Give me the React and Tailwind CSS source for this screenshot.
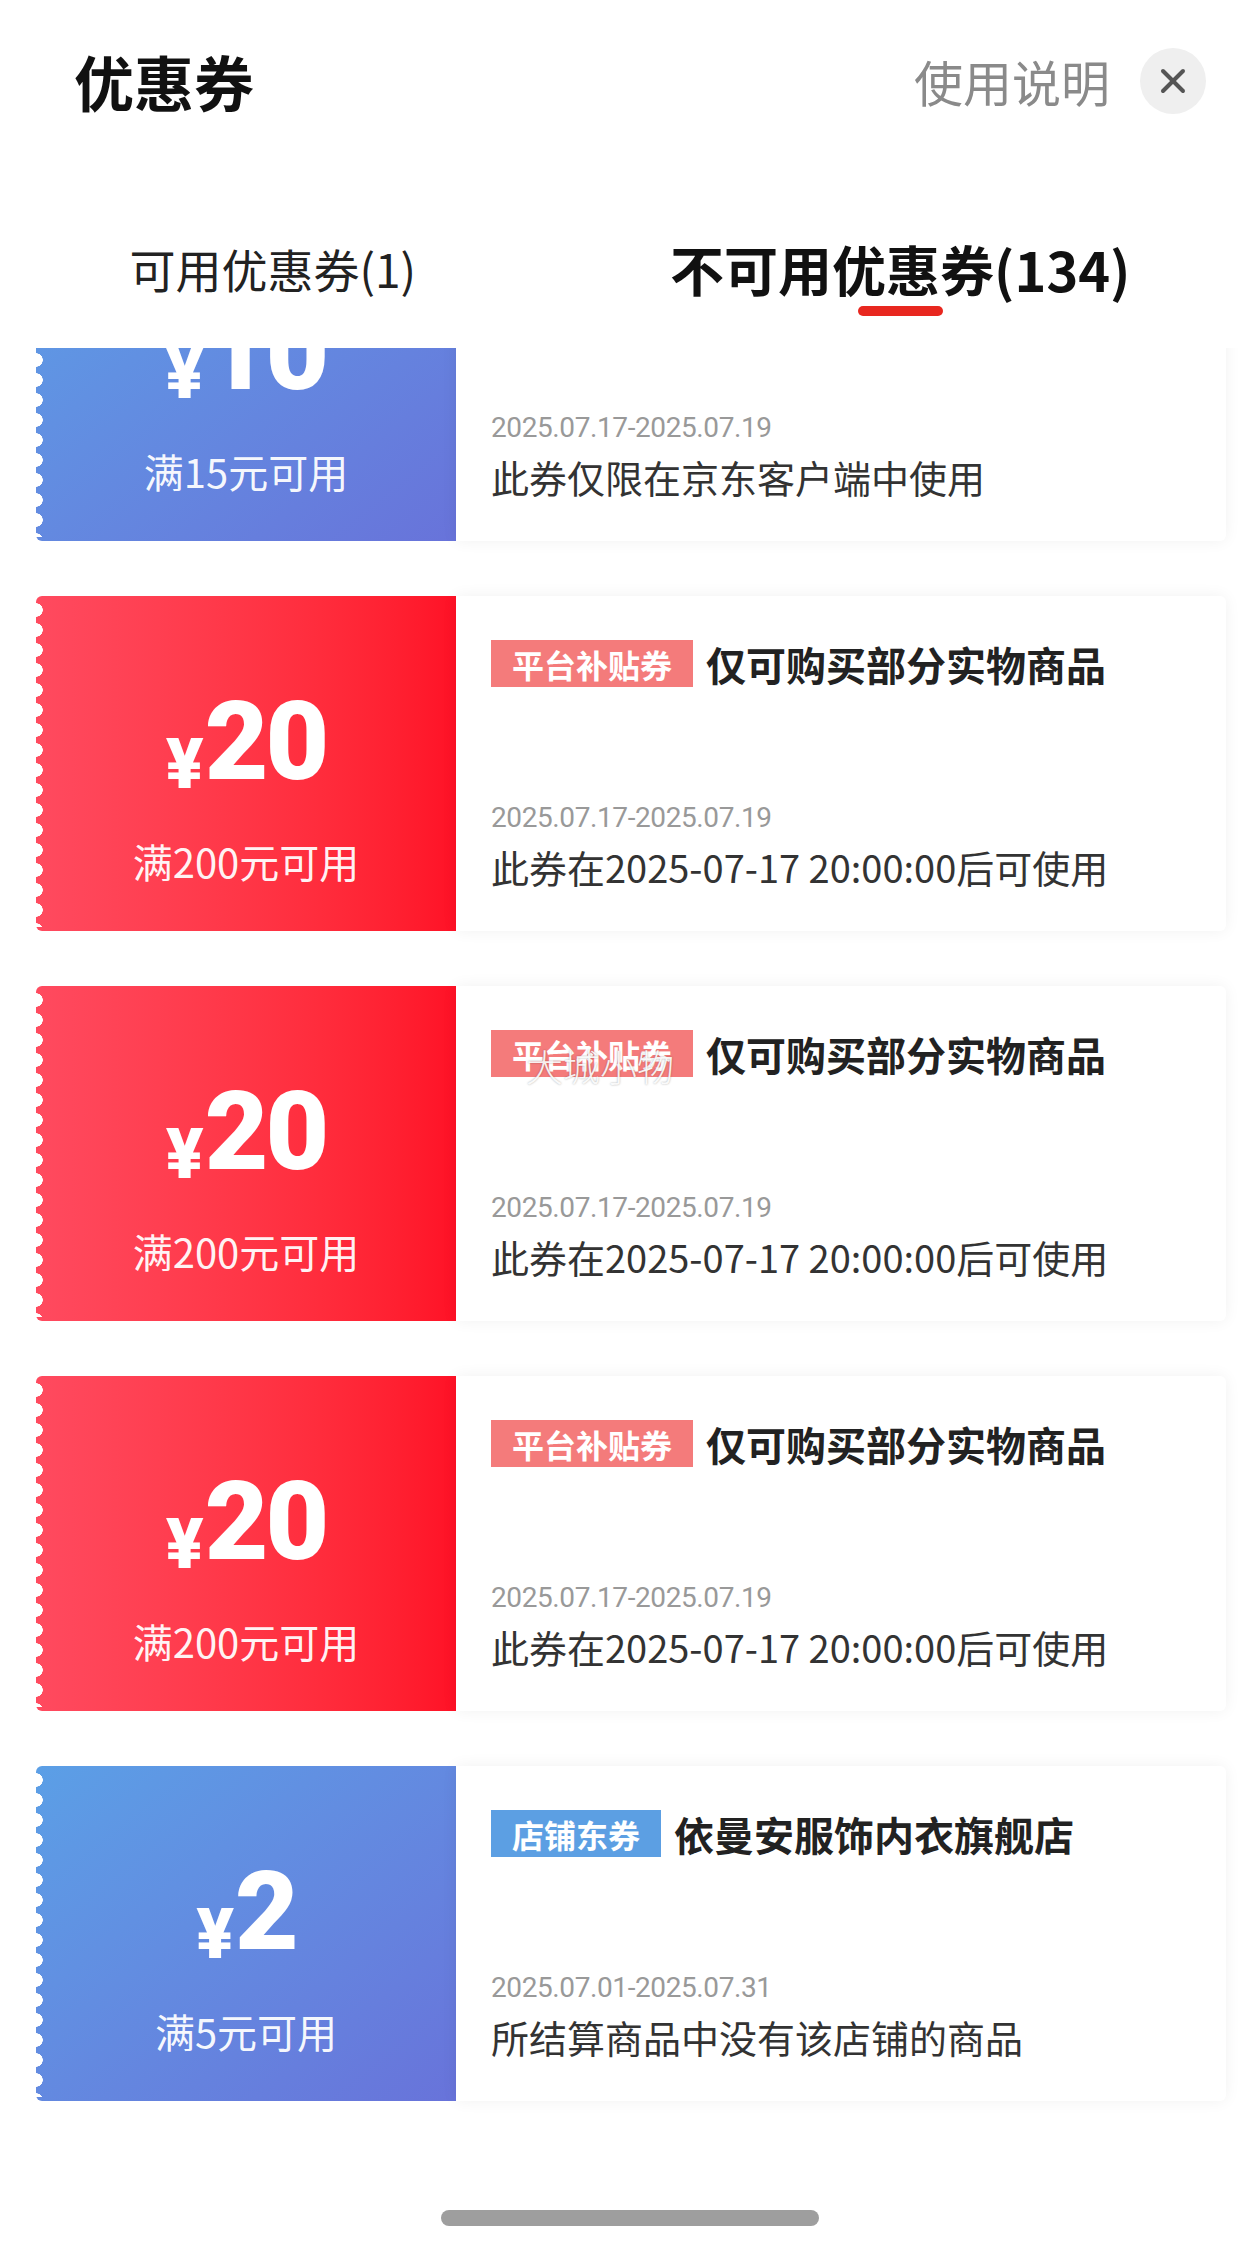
import React from 'react';
import { X } from 'lucide-react';

const coupons = [
  {
    theme: 'blue',
    amount: '10',
    cond: '满15元可用',
    tag: null,
    title: '',
    date: '2025.07.17-2025.07.19',
    desc: '此券仅限在京东客户端中使用',
  },
  {
    theme: 'red',
    amount: '20',
    cond: '满200元可用',
    tag: '平台补贴券',
    title: '仅可购买部分实物商品',
    date: '2025.07.17-2025.07.19',
    desc: '此券在2025-07-17 20:00:00后可使用',
  },
  {
    theme: 'red',
    amount: '20',
    cond: '满200元可用',
    tag: '平台补贴券',
    title: '仅可购买部分实物商品',
    date: '2025.07.17-2025.07.19',
    desc: '此券在2025-07-17 20:00:00后可使用',
    watermark: '大城小物',
  },
  {
    theme: 'red',
    amount: '20',
    cond: '满200元可用',
    tag: '平台补贴券',
    title: '仅可购买部分实物商品',
    date: '2025.07.17-2025.07.19',
    desc: '此券在2025-07-17 20:00:00后可使用',
  },
  {
    theme: 'blue',
    amount: '2',
    cond: '满5元可用',
    tag: '店铺东券',
    title: '依曼安服饰内衣旗舰店',
    date: '2025.07.01-2025.07.31',
    desc: '所结算商品中没有该店铺的商品',
  },
];

const CouponCard = ({ coupon, first }) => {
  const isRed = coupon.theme === 'red';

  return (
    <div className={`flex h-[335px] shrink-0 ${first ? '-mt-[142px]' : ''}`}>
      {/* amount side */}
      <div
        className={`relative w-[420px] shrink-0 flex flex-col items-center pt-[91px] rounded-l-[6px] ${
          isRed
            ? 'bg-linear-to-r from-[#ff4a5f] to-[#ff1126]'
            : 'bg-linear-to-br from-[#5b9fe6] to-[#6873da]'
        }`}
      >
        {/* scalloped edge */}
        <div className="absolute left-0 top-[4px] bottom-[4px] w-[8px] bg-[radial-gradient(circle_at_0_10px,#ffffff_6.5px,transparent_7px)] bg-[length:8px_20px] bg-repeat-y" />
        <div className="flex items-baseline text-white font-black leading-none font-['Roboto','Noto_Sans_CJK_SC',sans-serif]">
          <span className="text-[70px] translate-y-[9px] mr-[1px]">¥</span>
          <span className="text-[110px] tracking-[-3px]">{coupon.amount}</span>
        </div>
        <div className="mt-[40px] text-[40px] leading-[48px] text-white/95">{coupon.cond}</div>
      </div>

      {/* info side */}
      <div className="relative flex-1 flex flex-col bg-white rounded-r-[6px] shadow-[0_0_16px_rgba(0,0,0,0.06)] pl-[35px] pt-[44px] pb-[40px]">
        {coupon.tag && (
          <div className="flex items-center h-[47px]">
            <span
              className={`h-[47px] px-[21px] flex items-center text-[32px] font-bold text-white ${
                isRed ? 'bg-[#f47b7b]' : 'bg-[#5c9fe3]'
              }`}
            >
              {coupon.tag}
            </span>
            <span className="ml-[13px] text-[40px] font-bold leading-none text-[#222]">{coupon.title}</span>
          </div>
        )}
        {coupon.watermark && (
          <div className="absolute left-[70px] top-[62px] text-[37px] leading-none font-light text-white/90 [text-shadow:0_0_2px_rgba(0,0,0,0.35)]">
            {coupon.watermark}
          </div>
        )}
        <div className="mt-auto text-[28px] leading-[36px] tracking-[-0.4px] text-[#999] font-['Roboto','Noto_Sans_CJK_SC',sans-serif]">
          {coupon.date}
        </div>
        <div className="mt-[7px] text-[38px] leading-[48px] text-[#333]">{coupon.desc}</div>
      </div>
    </div>
  );
};

const App = () => {
  return (
    <div className="relative w-[1260px] h-[2246px] overflow-hidden bg-white font-['Noto_Sans_CJK_SC','Noto_Sans',sans-serif]">
      {/* Header */}
      <div className="flex items-center justify-between h-[162px] pl-[74px] pr-[54px]">
        <h1 className="text-[60px] font-bold text-[#111]">优惠券</h1>
        <div className="flex items-center">
          <span className="text-[49px] text-[#8a8a8a]">使用说明</span>
          <button className="ml-[30px] w-[66px] h-[66px] rounded-full bg-[#efefef] flex items-center justify-center text-[#555]">
            <X size={40} strokeWidth={2.4} />
          </button>
        </div>
      </div>

      {/* Tabs */}
      <div className="flex justify-center gap-[254px] h-[186px] pt-[74px]">
        <div className="h-[64px] flex items-center text-[46px] text-[#222]">可用优惠券(1)</div>
        <div className="flex flex-col items-center">
          <div className="h-[64px] flex items-center text-[54px] font-bold text-[#111]">不可用优惠券(134)</div>
          <div className="mt-[6px] w-[85px] h-[10px] rounded-full bg-[#e8271f]" />
        </div>
      </div>

      {/* Coupon list */}
      <div className="h-[1898px] overflow-hidden flex flex-col gap-[55px] pl-[36px] pr-[34px]">
        {coupons.map((c, i) => (
          <CouponCard key={i} coupon={c} first={i === 0} />
        ))}
      </div>

      {/* home indicator */}
      <div className="absolute left-[441px] bottom-[20px] w-[378px] h-[16px] rounded-full bg-[#9e9e9e]" />
    </div>
  );
};

export default App;
